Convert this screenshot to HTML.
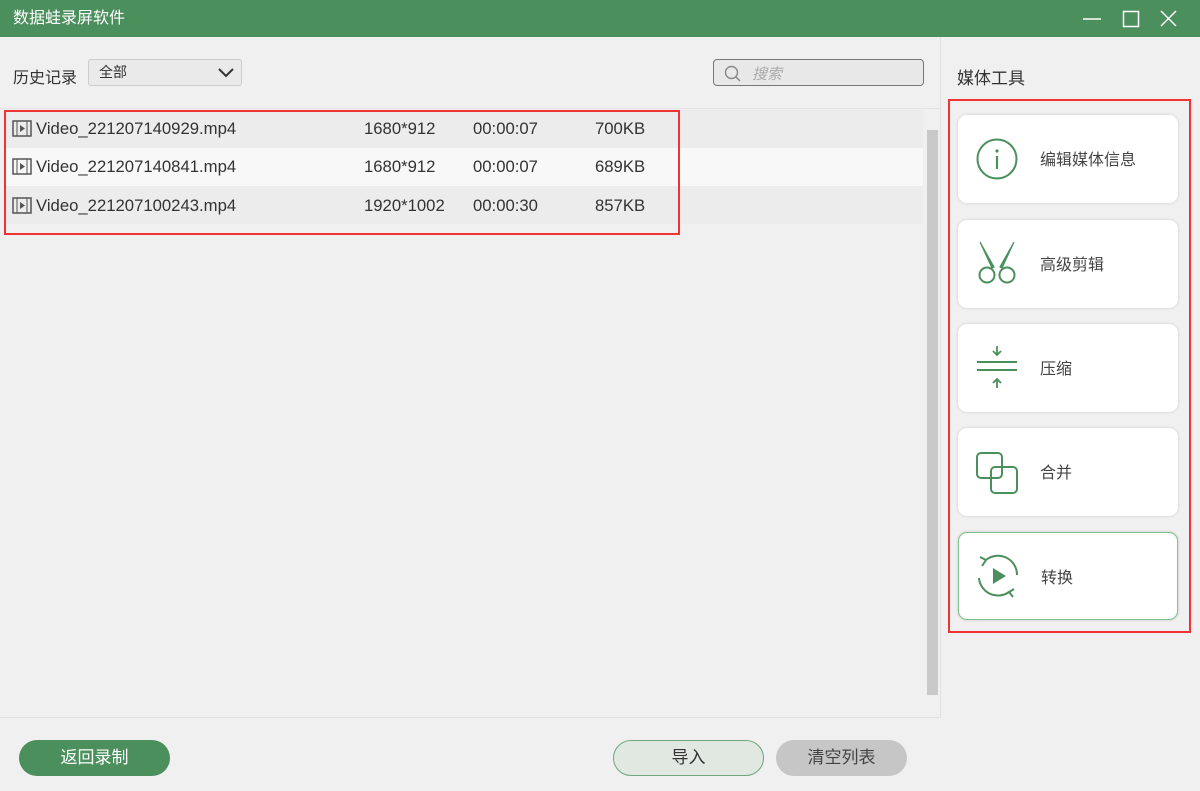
<!DOCTYPE html>
<html><head><meta charset="utf-8"><style>
*{margin:0;padding:0;box-sizing:border-box}
body{width:1200px;height:791px;background:#f0f0f0;font-family:"Liberation Sans","Noto Sans CJK SC",sans-serif;position:relative;overflow:hidden;color:#333}
.abs{position:absolute}
.title{left:0;top:0;width:1200px;height:37px;background:#4b8f5d;color:#fff;font-size:16px;line-height:37px;padding-left:13px}
.row{left:6px;width:917px;height:38px;font-size:16px;line-height:38px;color:#333}
.card{left:958px;width:220px;height:88px;background:#fff;border-radius:9px;box-shadow:0 0 3px rgba(0,0,0,.15);font-size:16px;color:#444}
.card .t{position:absolute;left:82px;top:2px;line-height:88px}
.card svg{position:absolute;left:18px;top:23px}
.btn{height:36px;border-radius:18px;font-size:17px;text-align:center;line-height:36px;top:740px}
.fr{font-size:16.7px}
</style></head><body>
<div class="abs title">数据蛙录屏软件</div>
<svg class="abs" style="left:1080px;top:8px" width="110" height="22"><line x1="3" y1="11" x2="21" y2="11" stroke="#fff" stroke-width="1.5"/><rect x="43.5" y="3.5" width="15" height="15" fill="none" stroke="#fff" stroke-width="1.5"/><path d="M81 3L96 18M96 3L81 18" stroke="#fff" stroke-width="1.5"/></svg>
<div class="abs" style="left:940px;top:37px;width:1px;height:681px;background:#e2e2e2"></div>
<div class="abs" style="left:13px;top:64px;font-size:16px">历史记录</div>
<div class="abs" style="left:88px;top:59px;width:154px;height:27px;border:1px solid #ccc;border-radius:3px;background:#eaeaea;font-size:14px;line-height:25px;padding-left:10px">全部<svg class="abs" style="left:128px;top:7px" width="18" height="12"><path d="M2 2L9 9L16 2" fill="none" stroke="#333" stroke-width="2"/></svg></div>
<div class="abs" style="left:713px;top:59px;width:211px;height:27px;border:1px solid #777;border-radius:4px;background:#e8e8e8"><svg class="abs" style="left:10px;top:5px" width="18" height="18"><circle cx="7.5" cy="7.5" r="6" fill="none" stroke="#888" stroke-width="1.4"/><line x1="12" y1="12" x2="16" y2="16" stroke="#888" stroke-width="1.5"/></svg><span class="abs" style="left:38px;top:3px;font-size:15px;color:#aaa;font-style:italic">搜索</span></div>
<div class="abs" style="left:0;top:108px;width:940px;height:1px;background:#e2e2e2"></div>
<div class="abs" style="left:957px;top:64px;font-size:17px;color:#333">媒体工具</div>

<div class="abs row" style="top:110px;background:#ececec"></div>
<div class="abs row" style="top:148px;background:#f8f8f8"></div>
<div class="abs row" style="top:186px;background:#ececec"></div>
<div class="abs" style="left:927px;top:130px;width:11px;height:565px;background:#c9c9c9"></div>

<div class="abs fr" style="left:0;top:110px;width:930px;height:120px">
<div class="abs" style="top:0;left:0;width:930px;height:38px;line-height:38px"><svg class="abs" style="left:12px;top:10px" width="20" height="17"><rect x="1" y="1" width="18" height="15" fill="none" stroke="#555" stroke-width="1.5"/><line x1="5" y1="1" x2="5" y2="16" stroke="#555"/><line x1="15" y1="1" x2="15" y2="16" stroke="#555"/><path d="M8 5L13 8.5L8 12Z" fill="#555"/></svg><span class="abs" style="left:36px">Video_221207140929.mp4</span><span class="abs" style="left:364px">1680*912</span><span class="abs" style="left:473px">00:00:07</span><span class="abs" style="left:595px">700KB</span></div>
<div class="abs" style="top:38px;left:0;width:930px;height:38px;line-height:38px"><svg class="abs" style="left:12px;top:10px" width="20" height="17"><rect x="1" y="1" width="18" height="15" fill="none" stroke="#555" stroke-width="1.5"/><line x1="5" y1="1" x2="5" y2="16" stroke="#555"/><line x1="15" y1="1" x2="15" y2="16" stroke="#555"/><path d="M8 5L13 8.5L8 12Z" fill="#555"/></svg><span class="abs" style="left:36px">Video_221207140841.mp4</span><span class="abs" style="left:364px">1680*912</span><span class="abs" style="left:473px">00:00:07</span><span class="abs" style="left:595px">689KB</span></div>
<div class="abs" style="top:77px;left:0;width:930px;height:38px;line-height:38px"><svg class="abs" style="left:12px;top:10px" width="20" height="17"><rect x="1" y="1" width="18" height="15" fill="none" stroke="#555" stroke-width="1.5"/><line x1="5" y1="1" x2="5" y2="16" stroke="#555"/><line x1="15" y1="1" x2="15" y2="16" stroke="#555"/><path d="M8 5L13 8.5L8 12Z" fill="#555"/></svg><span class="abs" style="left:36px">Video_221207100243.mp4</span><span class="abs" style="left:364px">1920*1002</span><span class="abs" style="left:473px">00:00:30</span><span class="abs" style="left:595px">857KB</span></div>
</div>
<div class="abs" style="left:4px;top:110px;width:676px;height:125px;border:2px solid #f03333"></div>

<div class="abs" style="left:948px;top:99px;width:243px;height:534px;border:2px solid #f03333"></div>
<div class="abs card" style="top:115px"><svg width="42" height="42"><circle cx="21" cy="21" r="19.5" fill="none" stroke="#4b8f5d" stroke-width="2"/><circle cx="21" cy="13" r="1.6" fill="#4b8f5d"/><line x1="21" y1="18" x2="21" y2="31" stroke="#4b8f5d" stroke-width="2.2"/></svg><span class="t">编辑媒体信息</span></div>
<div class="abs card" style="top:220px"><svg width="42" height="44" style="top:21px"><path d="M4 1L18 26L16 27Z M38 1L24 26L26 27Z" fill="#4b8f5d" stroke="#4b8f5d" stroke-width="1.2"/><circle cx="11" cy="34" r="7.5" fill="none" stroke="#4b8f5d" stroke-width="2"/><circle cx="31" cy="34" r="7.5" fill="none" stroke="#4b8f5d" stroke-width="2"/></svg><span class="t">高级剪辑</span></div>
<div class="abs card" style="top:324px"><svg width="42" height="42" style="top:22px"><path d="M21 0V9M17 5L21 9L25 5M21 42V33M17 37L21 33L25 37" fill="none" stroke="#4b8f5d" stroke-width="1.8"/><line x1="1" y1="16" x2="41" y2="16" stroke="#4b8f5d" stroke-width="2"/><line x1="1" y1="24" x2="41" y2="24" stroke="#4b8f5d" stroke-width="2"/></svg><span class="t">压缩</span></div>
<div class="abs card" style="top:428px"><svg width="42" height="42" style="top:24px"><rect x="1" y="1" width="25" height="25" rx="4" fill="none" stroke="#4b8f5d" stroke-width="2"/><rect x="15" y="15" width="26" height="26" rx="4" fill="none" stroke="#4b8f5d" stroke-width="2"/></svg><span class="t">合并</span></div>
<div class="abs card" style="top:532px;border:1px solid #7cc28c"><svg width="44" height="44" style="top:21px;left:17px"><path d="M3 24A19 19 0 0 0 33 38M10 6A19 19 0 0 1 41 21" fill="none" stroke="#4b8f5d" stroke-width="2"/><path d="M4 3L10 6L6 12" fill="none" stroke="#4b8f5d" stroke-width="2"/><path d="M38 35L33 38L37 43" fill="none" stroke="#4b8f5d" stroke-width="2"/><path d="M17 14L30 22L17 30Z" fill="#4b8f5d"/></svg><span class="t">转换</span></div>

<div class="abs" style="left:0;top:717px;width:940px;height:1px;background:#e2e2e2"></div>
<div class="abs btn" style="left:19px;width:151px;background:#4b8f5d;color:#fff">返回录制</div>
<div class="abs btn" style="left:613px;width:151px;background:#e1e8e2;border:1px solid #6ea57c;color:#333;line-height:34px">导入</div>
<div class="abs btn" style="left:776px;width:131px;background:#c6c6c6;color:#444">清空列表</div>
</body></html>
